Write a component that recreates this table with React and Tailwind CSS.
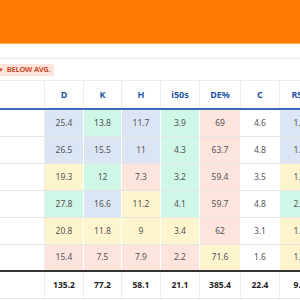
const COLS = [
  { key: 'name', label: '', w: 'w-[45px]' },
  { key: 'd', label: 'D', w: 'w-[39px]' },
  { key: 'k', label: 'K', w: 'w-[38px]' },
  { key: 'h', label: 'H', w: 'w-[39px]' },
  { key: 'i50s', label: 'i50s', w: 'w-[39px]' },
  { key: 'de', label: 'DE%', w: 'w-[41px]' },
  { key: 'c', label: 'C', w: 'w-[39px]' },
  { key: 'r50', label: 'R50', w: 'w-[40px]' },
];

const TONE = {
  B: 'bg-[#dce5f4]',
  G: 'bg-[#cff7e7]',
  Y: 'bg-[#fef4cd]',
  R: 'bg-[#fde4dc]',
  W: 'bg-white',
};

const ROWS = [
  [['25.4', 'B'], ['13.8', 'G'], ['11.7', 'B'], ['3.9', 'G'], ['69', 'R'], ['4.6', 'W'], ['1.3', 'B']],
  [['26.5', 'B'], ['15.5', 'B'], ['11', 'B'], ['4.3', 'G'], ['63.7', 'R'], ['4.8', 'W'], ['1.5', 'B']],
  [['19.3', 'Y'], ['12', 'G'], ['7.3', 'R'], ['3.2', 'G'], ['59.4', 'R'], ['3.5', 'W'], ['1.2', 'Y']],
  [['27.8', 'G'], ['16.6', 'B'], ['11.2', 'Y'], ['4.1', 'G'], ['59.7', 'R'], ['4.8', 'W'], ['2.1', 'G']],
  [['20.8', 'Y'], ['11.8', 'Y'], ['9', 'Y'], ['3.4', 'Y'], ['62', 'R'], ['3.1', 'W'], ['1.6', 'Y']],
  [['15.4', 'R'], ['7.5', 'R'], ['7.9', 'R'], ['2.2', 'R'], ['71.6', 'Y'], ['1.6', 'W'], ['1.4', 'Y']],
];

const TOTALS = ['135.2', '77.2', '58.1', '21.1', '385.4', '22.4', '9.1'];

export default function App() {
  return (
    <div className="w-[300px] h-[300px] overflow-hidden bg-white font-['Noto_Sans',sans-serif]">
      {/* Top bar */}
      <div className="h-[44px] bg-[#ff7a00] border-b border-[#ffa857]"></div>
      <div className="h-[15px] border-b border-[#ececec]"></div>

      {/* Legend */}
      <div className="h-[22px] flex items-center border-b border-[#ececec]">
        <div className="-ml-[6px] h-[12px] px-[4px] flex items-center gap-[3px] bg-[#fde4dc] text-[#c9502e] text-[7.5px] font-bold uppercase tracking-tight leading-none">
          <span className="text-[6px]">▼</span>
          <span>Below avg.</span>
        </div>
      </div>

      {/* Table */}
      <div className="w-max">
        <div className="flex h-[29px] border-b-2 border-[#3c6cb7]">
          {COLS.map(c => (
            <div key={c.key} className={`${c.w} shrink-0 flex items-center justify-center border-r border-[#ececec] text-[9px] font-bold text-[#2454a6]`}>
              {c.label}
            </div>
          ))}
        </div>

        {ROWS.map((row, i) => (
          <div key={i} className={`flex h-[27px] ${i === ROWS.length - 1 ? 'border-b-2 border-[#333]' : 'border-b border-[#e6e6e6]'}`}>
            <div className="w-[45px] shrink-0 border-r border-[#ececec]"></div>
            {row.map(([v, t], j) => (
              <div key={j} className={`${COLS[j + 1].w} shrink-0 flex items-center justify-center border-r border-white text-[8.5px] text-[#555] ${TONE[t]}`}>
                {v}
              </div>
            ))}
          </div>
        ))}

        <div className="flex h-[27px] border-b border-[#e6e6e6]">
          <div className="w-[45px] shrink-0 border-r border-[#ececec]"></div>
          {TOTALS.map((v, j) => (
            <div key={j} className={`${COLS[j + 1].w} shrink-0 flex items-center justify-center border-r border-[#ececec] text-[8.5px] font-bold text-[#222]`}>
              {v}
            </div>
          ))}
        </div>
      </div>
    </div>
  );
}
